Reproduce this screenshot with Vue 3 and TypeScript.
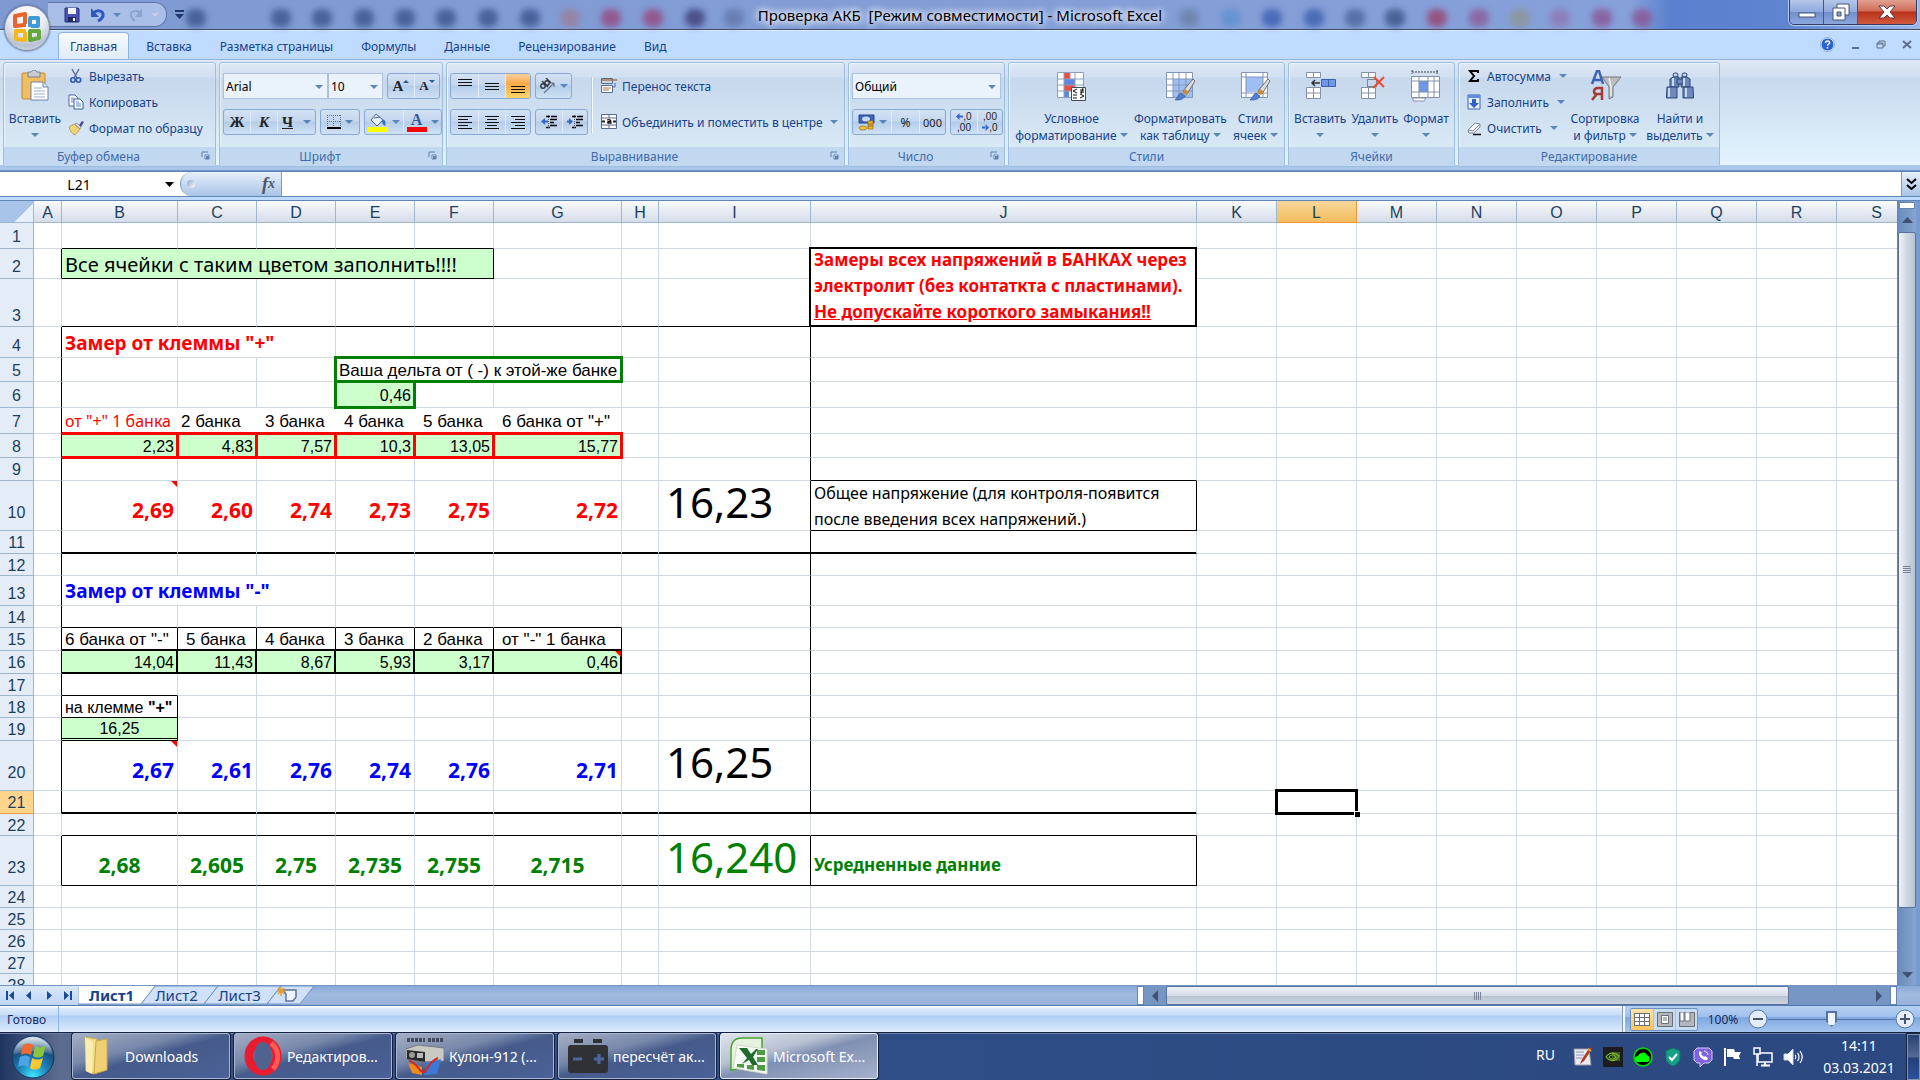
<script setup lang="ts">
import { ref } from 'vue'

interface Cell {
  text?: string
  bold?: string
  cls?: string
  colspan?: number
  rowspan?: number
}

const columns = [
  { name: 'A', width: 28 }, { name: 'B', width: 116 }, { name: 'C', width: 79 }, { name: 'D', width: 79 },
  { name: 'E', width: 79 }, { name: 'F', width: 79 }, { name: 'G', width: 128 }, { name: 'H', width: 37 },
  { name: 'I', width: 152 }, { name: 'J', width: 386 }, { name: 'K', width: 80 }, { name: 'L', width: 80 },
  { name: 'M', width: 80 }, { name: 'N', width: 80 }, { name: 'O', width: 80 }, { name: 'P', width: 80 },
  { name: 'Q', width: 80 }, { name: 'R', width: 80 }, { name: 'S', width: 80 },
]
const rowHeights = [26, 30, 48, 31, 24, 26, 26, 24, 23, 50, 23, 22, 30, 22, 23, 23, 22, 22, 23, 50, 23, 22, 50, 22, 22, 22, 22, 22]
const tableWidth = columns.reduce((sum, c) => sum + c.width, 34)

const cells: Record<string, Cell> = {
  B2: { text: 'Все ячейки с таким цветом заполнить!!!!', cls: 'fill calibri t20', colspan: 5 },
  J2: { cls: 'box2', rowspan: 2 },
  B4: { text: 'Замер от клеммы "+"', cls: 'calibri t19 b red', colspan: 3 },
  E5: { text: 'Ваша дельта от ( -) к этой-же банке', cls: 'green-box label', colspan: 3 },
  E6: { text: '0,46', cls: 'fill r green-box' },
  B7: { text: 'от "+" 1 банка', cls: 'red small bare' },
  C7: { text: '2 банка', cls: 'label bare' },
  D7: { text: '3 банка', cls: 'label ind bare' },
  E7: { text: '4 банка', cls: 'label ind bare' },
  F7: { text: '5 банка', cls: 'label ind bare' },
  G7: { text: '6 банка от "+"', cls: 'label ind' },
  J10: { cls: 'note' },
  I10: { text: '16,23', cls: 'calibri t42' },
  B13: { text: 'Замер от клеммы "-"', cls: 'calibri t19 b blue', colspan: 3 },
  B15: { text: '6 банка от "-"', cls: 'label' },
  C15: { text: '5 банка', cls: 'label ind' },
  D15: { text: '4 банка', cls: 'label ind' },
  E15: { text: '3 банка', cls: 'label ind' },
  F15: { text: '2 банка', cls: 'label ind' },
  G15: { text: 'от "-" 1 банка', cls: 'label ind' },
  B18: { text: 'на клемме ', bold: '"+"' },
  B19: { text: '16,25', cls: 'fill c dbl' },
  I20: { text: '16,25', cls: 'calibri t42' },
  L21: { cls: 'selected' },
  I23: { text: '16,240', cls: 'calibri t42 green' },
  J23: { text: 'Усредненные данние', cls: 'calibri t17 b green low' },
}

const letters = columns.map((c) => c.name)

function fillRow(row: number, values: string[], cls: string) {
  values.forEach((text, i) => {
    cells[`${letters[i + 1]}${row}`] = { text, cls }
  })
}
fillRow(8, ['2,23', '4,83', '7,57', '10,3', '13,05', '15,77'], 'fill r red-box')
fillRow(10, ['2,69', '2,60', '2,74', '2,73', '2,75', '2,72'], 'calibri t21 b r red low')
fillRow(16, ['14,04', '11,43', '8,67', '5,93', '3,17', '0,46'], 'fill r')
fillRow(20, ['2,67', '2,61', '2,76', '2,74', '2,76', '2,71'], 'calibri t21 b r blue low')
fillRow(23, ['2,68', '2,605', '2,75', '2,735', '2,755', '2,715'], 'calibri t21 b c green low')

function mark(from: string, to: string, first: number, last: number, cls: string) {
  for (let c = letters.indexOf(from); c <= letters.indexOf(to); c++) {
    for (let r = first; r <= last; r++) {
      const key = `${letters[c]}${r}`
      const cell = (cells[key] ??= {})
      cell.cls = `${cell.cls ?? ''} ${cls}`
    }
  }
}
mark('A', 'A', 2, 2, 'kr')
mark('B', 'F', 1, 1, 'kb')
mark('B', 'B', 2, 2, 'kr kb')
mark('B', 'I', 3, 3, 'kb')
mark('A', 'A', 4, 21, 'kr')
mark('I', 'I', 4, 21, 'kr')
mark('J', 'J', 9, 10, 'kb')
mark('J', 'J', 10, 10, 'kr')
mark('B', 'J', 11, 11, 'kb2')
mark('B', 'G', 14, 14, 'kb')
mark('B', 'G', 15, 15, 'kr kb2')
mark('B', 'G', 16, 16, 'kr2 kb2')
mark('B', 'B', 17, 17, 'kb')
mark('B', 'B', 18, 18, 'kr kb')
mark('B', 'B', 19, 19, 'kr')
mark('B', 'J', 21, 21, 'kb2')
mark('B', 'J', 22, 22, 'kb')
mark('A', 'A', 23, 23, 'kr')
mark('B', 'J', 23, 23, 'kb')
mark('I', 'J', 23, 23, 'kr')
mark('B', 'B', 10, 10, 'comment')
mark('B', 'B', 20, 20, 'comment')
mark('G', 'G', 16, 16, 'comment')

const covered = new Set(['C2', 'D2', 'E2', 'F2', 'J3', 'C4', 'D4', 'F5', 'G5', 'C13', 'D13'])

function lift(height: number) {
  if (height === 50) return 'p8'
  if (height === 48) return 'p1'
  if (height >= 26) return 'p2'
  return height > 22 ? 'p1' : ''
}

const rows = rowHeights.map((height, i) => ({
  number: i + 1,
  height,
  lift: lift(height),
  cells: letters.filter((l) => !covered.has(`${l}${i + 1}`)).map((l) => ({ key: `${l}${i + 1}`, ...cells[`${l}${i + 1}`] })),
}))

const ribbonTabs = ['Вставка', 'Разметка страницы', 'Формулы', 'Данные', 'Рецензирование', 'Вид']
const sheetTabs = ['Лист1', 'Лист2', 'Лист3']
const activeCell = ref('L21')
const formula = ref('')
const fontName = ref('Arial')
const fontSize = ref('10')
const numberFormat = ref('Общий')
const zoomLevel = ref(50)

const glassSpots = [
  { x: 196, color: '#3b568c' }, { x: 281, color: '#3b568c' }, { x: 322, color: '#3b568c' }, { x: 364, color: '#3b568c' },
  { x: 405, color: '#3b568c' }, { x: 446, color: '#3b568c' }, { x: 488, color: '#3b568c' }, { x: 530, color: '#3b568c' },
  { x: 570, color: '#9a8099' }, { x: 611, color: '#96497f' }, { x: 653, color: '#96497f' }, { x: 695, color: '#3d3f78' },
  { x: 734, color: '#6278ab' }, { x: 1189, color: '#6b82a6' }, { x: 1231, color: '#5f90cf' }, { x: 1272, color: '#3c5eae' },
  { x: 1314, color: '#3c5eae' }, { x: 1355, color: '#4b669c' }, { x: 1395, color: '#3a5585' }, { x: 1437, color: '#99426e' },
  { x: 1479, color: '#8b5c98' }, { x: 1520, color: '#8d9593' }, { x: 1560, color: '#8f78b4' }, { x: 1602, color: '#8a5595' },
  { x: 1642, color: '#8a5595' },
]
</script>

<template>
  <div class="app">
    <header class="titlebar">
      <span v-for="spot in glassSpots" :key="spot.x" class="spot" :style="{ left: spot.x - 10 + 'px', background: spot.color }"></span>
      <div class="qat">
        <button aria-label="Сохранить">
          <svg width="16" height="16" viewBox="0 0 16 16"><path d="M1 1h13l1 1v13H1z" fill="#4a50b8" stroke="#27307e" /><path d="M4 1h8v6H4z" fill="#eef2fb" /><path d="M4 10h8v5H4z" fill="#20285f" /><path d="M9 11h2v3H9z" fill="#fff" /></svg>
        </button>
        <button aria-label="Отменить">
          <svg width="18" height="16" viewBox="0 0 18 16"><path d="M4 6c5-4 11-2 10 3-1 3-3 4-5 5" fill="none" stroke="#2f5bc0" stroke-width="3" /><path d="M2 1v9h8z" fill="#2f5bc0" /></svg>
        </button>
        <i class="tri"></i>
        <button aria-label="Вернуть">
          <svg width="18" height="16" viewBox="0 0 18 16"><path d="M14 6C9 2 3 4 4 9c1 3 2 4 4 5" fill="none" stroke="#8ba3cf" stroke-width="2" /><path d="M15 2v8H8z" fill="#8ba3cf" /></svg>
        </button>
        <i class="tri pale"></i>
      </div>
      <button class="qat-more" aria-label="Настройка панели быстрого доступа"><svg width="9" height="10" viewBox="0 0 9 10"><path d="M0 1h9" stroke="#1f3567" stroke-width="2" /><path d="M0 4h9L4.500 9z" fill="#1f3567" /></svg></button>
      <h1>Проверка АКБ&nbsp; [Режим совместимости] - Microsoft Excel</h1>
      <div class="win-controls">
        <button aria-label="Свернуть"><svg width="18" height="14" viewBox="0 0 18 14"><rect x="1" y="8" width="16" height="4" fill="#fff" stroke="#475578" /></svg></button>
        <button aria-label="Восстановить"><svg width="20" height="18" viewBox="0 0 20 18"><path d="M6 1h12v11H6z" fill="#fff" stroke="#475578" /><path d="M2 5h12v12H2z" fill="#fff" stroke="#475578" /><path d="M6 9h4v4H6z" fill="#8b9dcb" stroke="#475578" /></svg></button>
        <button class="close" aria-label="Закрыть"><svg width="18" height="14" viewBox="0 0 18 14"><path d="M1 1h5l3 3 3-3h5l-5 6 5 6h-5L9 10l-3 3H1l5-6z" fill="#fff" stroke="#5b3a45" /></svg></button>
      </div>
      <button class="office" aria-label="Кнопка Office">
        <svg width="32" height="32" viewBox="0 0 32 32">
          <g fill="none" stroke-width="4" stroke-linejoin="round">
            <path d="M4 4l10-2v11l-10 1z" stroke="#e8642a" />
            <path d="M19 6h8v8h-8z" stroke="#3f9ad6" />
            <path d="M5 19h9v9l-9-1z" stroke="#f5b81c" />
            <path d="M19 19h9v7l-9 2z" stroke="#63a83c" />
          </g>
          <path d="M12 16h8M16 12v8" stroke="#fff" stroke-width="2" />
        </svg>
      </button>
    </header>

    <nav class="tabs">
      <button class="tab on">Главная</button>
      <button v-for="t in ribbonTabs" :key="t" class="tab">{{ t }}</button>
      <div class="doc-controls">
        <button aria-label="Справка"><svg width="15" height="15" viewBox="0 0 15 15"><circle cx="7.500" cy="7.500" r="6.500" fill="#2a62d4" stroke="#f5f9ff" stroke-width="1" /><circle cx="7.500" cy="7.500" r="7" fill="none" stroke="#5d83c4" stroke-width=".6" /><path d="M5.500 6c0-3 4.500-2.500 4 0-.2 1-2 1.200-2 2.700M7.500 10v1.500" stroke="#fff" stroke-width="1.500" fill="none" /></svg></button>
        <button aria-label="Свернуть окно"><svg width="9" height="9" viewBox="0 0 9 9"><path d="M1 8h7" stroke="#5f6f8a" stroke-width="2" /></svg></button>
        <button aria-label="Восстановить окно"><svg width="10" height="9" viewBox="0 0 10 9"><path d="M3 3V1h6v5H7M1 3h6v5H1z" fill="none" stroke="#5f6f8a" /><path d="M1 4h6" stroke="#5f6f8a" /></svg></button>
        <button aria-label="Закрыть окно"><svg width="10" height="9" viewBox="0 0 10 9"><path d="M1 1l8 7M9 1L1 8" stroke="#5f6f8a" stroke-width="2" /></svg></button>
      </div>
    </nav>

    <div class="ribbon">
      <section class="group g1">
        <div class="body">
          <button class="big paste">
            <svg width="28" height="32" viewBox="0 0 28 32"><rect x="1" y="3" width="23" height="26" rx="1" fill="#efbd62" stroke="#c28a34" /><path d="M7 2h3l2-2h2l2 2h3v5H7z" fill="#c5ccd6" stroke="#6a7484" stroke-width=".8" /><path d="M10 12h12l5 5v13H10z" fill="#fff" stroke="#6e83a6" /><path d="M22 12v5h5" fill="#dbe5f4" stroke="#6e83a6" /><path d="M13 18h8M13 21h11M13 24h11M13 27h11" stroke="#9badc9" /></svg>
            <span>Вставить</span><i class="tri"></i>
          </button>
          <div class="list">
            <button><svg width="16" height="16" viewBox="0 0 16 16"><path d="M4 1l5 9M11 1L6 10" stroke="#5a6f92" stroke-width="1.500" /><circle cx="5" cy="12" r="2.200" fill="none" stroke="#2d5bb5" stroke-width="1.600" /><circle cx="10.500" cy="12" r="2.200" fill="none" stroke="#2d5bb5" stroke-width="1.600" /></svg>Вырезать</button>
            <button><svg width="16" height="16" viewBox="0 0 16 16"><path d="M1 1h6l3 3v8H1z" fill="#fff" stroke="#4669a8" /><path d="M6 5h6l3 3v7H6z" fill="#fff" stroke="#3458a0" /><path d="M3 4h3M3 6h3M3 8h3M8 8h3M8 10h5M8 12h5" stroke="#5b83c8" /></svg>Копировать</button>
            <button><svg width="16" height="16" viewBox="0 0 16 16"><path d="M1 7l5-3 6 5-5 6c-3-1-5-4-6-8z" fill="#eed47a" stroke="#a88a3a" stroke-width=".7" /><path d="M7 4l5 5 1-2-4-4z" fill="#d8dde6" stroke="#777" stroke-width=".6" /><path d="M11 5l3-4 2 1-3 5z" fill="#4b4b93" /></svg>Формат по образцу</button>
          </div>
        </div>
        <footer class="with-launch"><span>Буфер обмена</span><button class="launch" aria-label="Параметры буфера обмена"><svg width="9" height="9" viewBox="0 0 9 9"><path d="M1 6V1h6" fill="none" stroke="#5c82ad" /><path d="M4 4h4v4H4z" fill="#fff" stroke="#5c82ad" /><path d="M5 5h3v3H5z" fill="#5c82ad" /></svg></button></footer>
      </section>

      <section class="group g2">
        <div class="body stack">
          <div class="line">
            <div class="sel w104"><select v-model="fontName" aria-label="Шрифт"><option>Arial</option></select><i class="tri"></i></div>
            <div class="sel w54"><select v-model="fontSize" aria-label="Размер шрифта"><option>10</option></select><i class="tri"></i></div>
            <div class="bar gap4"><button class="b26 serif" aria-label="Увеличить размер">A<i class="up"></i></button><button class="b25 serif sm" aria-label="Уменьшить размер">A<i class="dn"></i></button></div>
          </div>
          <div class="line">
            <div class="bar"><button class="b26 serif">Ж</button><button class="b27 serif it">К</button><button class="b38 serif un"><u>Ч</u><i class="tri"></i></button></div>
            <div class="bar gap4"><button class="b38" aria-label="Границы"><svg width="14" height="14" viewBox="0 0 14 14"><path d="M0 .5h14M0 6.500h14M.5 0v12M6.500 0v12M13.500 0v12" stroke="#5b6b85" stroke-dasharray="1 1" /><path d="M0 13h14" stroke="#000" stroke-width="2" /></svg><i class="tri"></i></button></div>
            <div class="bar gap4">
              <button class="b38" aria-label="Цвет заливки"><svg width="20" height="19" viewBox="0 0 20 19"><path d="M8 1l7 6-6 6-6-6z" fill="#e6eefb" stroke="#4a638f" /><path d="M6 5l6-1" stroke="#4a638f" /><path d="M14 6c4 1 4 4 3 7-2-1-3-3-3-5z" fill="#3c6fc8" /><path d="M0 14h20v5H0z" fill="#ff0" /></svg><i class="tri"></i></button>
              <button class="b38 color" aria-label="Цвет текста"><span class="letter">A</span><i class="tri"></i></button>
            </div>
          </div>
        </div>
        <footer class="with-launch"><span>Шрифт</span><button class="launch" aria-label="Параметры шрифта"><svg width="9" height="9" viewBox="0 0 9 9"><path d="M1 6V1h6" fill="none" stroke="#5c82ad" /><path d="M4 4h4v4H4z" fill="#fff" stroke="#5c82ad" /><path d="M5 5h3v3H5z" fill="#5c82ad" /></svg></button></footer>
      </section>

      <section class="group g3">
        <div class="body">
          <div class="stack">
            <div class="line">
              <div class="bar"><button class="b27 up-al" aria-label="По верхнему краю"><i class="al"></i></button><button class="b27" aria-label="По середине"><i class="al"></i></button><button class="b25 on dn-al" aria-label="По нижнему краю"><i class="al"></i></button></div>
              <div class="bar gap4"><button class="b36" aria-label="Ориентация"><svg width="17" height="16" viewBox="0 0 17 16"><g fill="none" stroke="#33373f" stroke-width="1.400"><circle cx="4" cy="8" r="2.200" /><path d="M3 3l6 6" /><circle cx="8" cy="5" r="2.200" /><path d="M7 0l5 5" /></g><path d="M5 15L15 5M15 5h-4M15 5v4" fill="none" stroke="#6a7388" stroke-width="1.200" /></svg><i class="tri"></i></button></div>
            </div>
            <div class="line">
              <div class="bar"><button class="b27" aria-label="По левому краю"><i class="al5 l"></i></button><button class="b27" aria-label="По центру"><i class="al5 m"></i></button><button class="b25" aria-label="По правому краю"><i class="al5 r"></i></button></div>
              <div class="bar gap4">
                <button class="b26" aria-label="Уменьшить отступ"><svg width="17" height="14" viewBox="0 0 17 14"><path d="M5 1.500h4M10 1.500h6M9 4.500h7M9 7.500h4M9 10.500h7M5 12.500h4" stroke="#000" stroke-width="1.500" /><path d="M7.500 0v14" stroke="#555" stroke-dasharray="1 1" /><path d="M4 3v7L0 6.500z" fill="#3567c7" /><path d="M3 6.500h4" stroke="#3567c7" stroke-width="2" /></svg></button>
                <button class="b25" aria-label="Увеличить отступ"><svg width="17" height="14" viewBox="0 0 17 14"><path d="M5 1.500h4M10 1.500h6M9 4.500h7M9 7.500h4M9 10.500h7M5 12.500h4" stroke="#000" stroke-width="1.500" /><path d="M7.500 0v14" stroke="#555" stroke-dasharray="1 1" /><path d="M2 3v7l4-3.500z" fill="#3567c7" /><path d="M0 6.500h4" stroke="#3567c7" stroke-width="2" /></svg></button>
              </div>
            </div>
          </div>
          <i class="vsep"></i>
          <div class="list wide">
            <button><svg width="16" height="16" viewBox="0 0 16 16"><path d="M0 2h16" stroke="#b0713c" stroke-width="1.500" /><path d="M.5.5h11v5H.5z" fill="none" stroke="#5a6c8c" /><path d="M.5 7.500h11v7H.5z" fill="#fff" stroke="#5a6c8c" /><path d="M2 10h8M2 12h6" stroke="#b0713c" /><path d="M14 5v4h-2" fill="none" stroke="#3567c7" /></svg>Перенос текста</button>
            <button><svg width="16" height="16" viewBox="0 0 16 16"><path d="M.5.5h15v14H.5z" fill="#fff" stroke="#5a6c8c" /><path d="M0 4h16M0 11h16M8 0v4M8 11v4" stroke="#5a6c8c" /><path d="M1 7.500h3M12 7.500h3" stroke="#222" stroke-width="2" /><path d="M6 6c3-1 4 0 4 3H7c-1-1 0-2 3-1.500" fill="none" stroke="#111" stroke-width="1.300" /></svg>Объединить и поместить в центре<i class="tri"></i></button>
          </div>
        </div>
        <footer class="with-launch"><span>Выравнивание</span><button class="launch" aria-label="Параметры выравнивания"><svg width="9" height="9" viewBox="0 0 9 9"><path d="M1 6V1h6" fill="none" stroke="#5c82ad" /><path d="M4 4h4v4H4z" fill="#fff" stroke="#5c82ad" /><path d="M5 5h3v3H5z" fill="#5c82ad" /></svg></button></footer>
      </section>

      <section class="group g4">
        <div class="body stack">
          <div class="line"><div class="sel w149"><select v-model="numberFormat" aria-label="Числовой формат"><option>Общий</option></select><i class="tri"></i></div></div>
          <div class="line">
            <div class="bar">
              <button class="b38" aria-label="Денежный формат"><svg width="17" height="17" viewBox="0 0 17 17"><path d="M1 1h15v8H1z" fill="#3e66b8" stroke="#27458c" /><ellipse cx="8" cy="5" rx="4" ry="2.500" fill="#c9d8f2" /><path d="M10 7h5v8h-5z" fill="#e9b730" stroke="#9b6d10" stroke-width=".7" /><path d="M10 10h5M10 12h5" stroke="#9b6d10" /><ellipse cx="5" cy="14" rx="4" ry="2" fill="#f0c040" stroke="#9b6d10" stroke-width=".7" /></svg><i class="tri"></i></button>
              <button class="b28">%</button><button class="b26 thousands">000</button>
            </div>
            <div class="bar gap4">
              <button class="b26 dec" aria-label="Увеличить разрядность"><span><svg width="7" height="7" viewBox="0 0 7 7"><path d="M0 3.500L3.500 0v7zM3 2.500h4v2H3z" fill="#3567c7" /></svg>,0</span><span>,00</span></button>
              <button class="b25 dec" aria-label="Уменьшить разрядность"><span>,00</span><span><svg width="7" height="7" viewBox="0 0 7 7"><path d="M7 3.500L3.500 0v7zM0 2.500h4v2H0z" fill="#3567c7" /></svg>,0</span></button>
            </div>
          </div>
        </div>
        <footer class="with-launch"><span>Число</span><button class="launch" aria-label="Параметры числа"><svg width="9" height="9" viewBox="0 0 9 9"><path d="M1 6V1h6" fill="none" stroke="#5c82ad" /><path d="M4 4h4v4H4z" fill="#fff" stroke="#5c82ad" /><path d="M5 5h3v3H5z" fill="#5c82ad" /></svg></button></footer>
      </section>

      <section class="group g5">
        <div class="body bigs">
          <button class="big"><svg width="32" height="32" viewBox="0 0 32 32"><path d="M2.500 2.500h26v25h-26z" fill="#fff" /><path d="M9 2h6v7H9zM9 15h11v6H9z" fill="#ee4f3c" /><path d="M9 9h11v6H9zM9 21h5v7H9z" fill="#5d87e0" /><path d="M2.500 2.500h26v25h-26zM2 9h27M2 15h27M2 21h27M9 2v26M15 2v7M20 2v26" fill="none" stroke="#8d9ebb" /><path d="M16.500 17.500h14v13h-14z" fill="#fff" stroke="#444b58" /><path d="M22 19l-4 2 4 2M18 25h4M18 28h4M25 20h4M25 22h4M28 18l-2 6M25 24l4 2-4 2" fill="none" stroke="#111" /></svg><span>Условное<br />форматирование <i class="tri"></i></span></button>
          <button class="big"><svg width="32" height="32" viewBox="0 0 32 32"><path d="M2.500 2.500h26v25h-26z" fill="#fff" /><path d="M9 9h20v19H9z" fill="#9fbff2" /><path d="M2.500 2.500h26v25h-26zM2 9h27M2 15h27M2 21h27M9 2v26M15 2v26M22 2v26" fill="none" stroke="#8295b5" /><path d="M29 9l2 2-8 13-4-3z" fill="#ddd" stroke="#555" stroke-width=".8" /><path d="M21 19l4 3-3 3-4-2z" fill="#c98b3e" /><path d="M17 23l4 3c-2 4-6 4-10 4 3-2 3-6 6-7z" fill="#4f80d2" stroke="#2e5396" stroke-width=".7" /></svg><span>Форматировать<br />как таблицу <i class="tri"></i></span></button>
          <button class="big"><svg width="32" height="32" viewBox="0 0 32 32"><path d="M2.500 2.500h26v25h-26z" fill="#fff" /><path d="M7 7h17v15H7z" fill="#9fbff2" /><path d="M2.500 2.500h26v25h-26zM2 7h27M2 23h27M7 2v26M24 2v26" fill="none" stroke="#8295b5" /><path d="M29 9l2 2-8 13-4-3z" fill="#ddd" stroke="#555" stroke-width=".8" /><path d="M21 19l4 3-3 3-4-2z" fill="#c98b3e" /><path d="M17 23l4 3c-2 4-6 4-10 4 3-2 3-6 6-7z" fill="#4f80d2" stroke="#2e5396" stroke-width=".7" /></svg><span>Стили<br />ячеек <i class="tri"></i></span></button>
        </div>
        <footer><span>Стили</span></footer>
      </section>

      <section class="group g6">
        <div class="body bigs">
          <button class="big"><svg width="32" height="32" viewBox="0 0 32 32"><path d="M2.500 2.500h14v5h-14zM2.500 17.500h14v11h-14zM2 23h15M9.500 2v6M9.500 17v11" fill="#fff" stroke="#8290a8" /><path d="M17.500 9.500h14v7h-14zM24.500 9v8" fill="#6d98e8" stroke="#3c5fa8" /><path d="M16 13H8M11 10l-3 3 3 3" fill="none" stroke="#333" stroke-width="1.500" /></svg><span>Вставить</span><i class="tri"></i></button>
          <button class="big"><svg width="32" height="32" viewBox="0 0 32 32"><path d="M2.500 2.500h14v5h-14zM2.500 17.500h14v11h-14zM2 23h15M9.500 2v6M9.500 17v11" fill="#fff" stroke="#8290a8" /><path d="M8.500 9.500h9v7h-9z" fill="none" stroke="#333" stroke-dasharray="1 1" /><path d="M15 7l10 10M25 7L14 18" stroke="#ee4a32" stroke-width="2" /></svg><span>Удалить</span><i class="tri"></i></button>
          <button class="big"><svg width="32" height="32" viewBox="0 0 32 32"><path d="M2 2h26M2 0v4M27 0v4" stroke="#444" stroke-dasharray="2 1" /><path d="M1.500 6.500h28v21h-28z" fill="#fff" /><path d="M9 11h9v11H9z" fill="#6d98e8" /><path d="M1.500 6.500h28v21h-28zM1 11h29M1 22h29M9 6v22M18 6v22M24 6v22" fill="none" stroke="#8290a8" /><path d="M3 28h13l-2 3H3z" fill="#fff" stroke="#8290a8" /></svg><span>Формат</span><i class="tri"></i></button>
        </div>
        <footer><span>Ячейки</span></footer>
      </section>

      <section class="group g7">
        <div class="body">
          <div class="list">
            <button><svg width="14" height="16" viewBox="0 0 14 16"><path d="M11 5V3H3l4 5-4 5h8v-2" fill="none" stroke="#000" stroke-width="2" /></svg>Автосумма<i class="tri"></i></button>
            <button><svg width="14" height="16" viewBox="0 0 14 16"><path d="M1 1h12v14H1z" fill="#e8f0fd" stroke="#3a62b0" /><path d="M1 1h12v3H1z" fill="#5f8be0" /><path d="M5 5h4v4h3l-5 5-5-5h3z" fill="#2f5fc8" /></svg>Заполнить<i class="tri"></i></button>
            <button><svg width="14" height="16" viewBox="0 0 14 16"><path d="M1 10l7-7 5 1v3l-6 6H2z" fill="#f4f6fa" stroke="#7d8798" /><path d="M1 10l5 1 7-7" fill="none" stroke="#7d8798" /><path d="M6 14.500h8" stroke="#111" stroke-width="1.500" /></svg>Очистить<i class="tri"></i></button>
          </div>
          <button class="big sort"><svg width="32" height="32" viewBox="0 0 32 32"><path d="M3 14L8 1h2l4 13M5 10h8" fill="none" stroke="#3b64b8" stroke-width="2.500" /><path d="M13 30V18H8c-4 1-4 6 0 6h5M8 24l-5 6" fill="none" stroke="#a33a34" stroke-width="2.500" /><path d="M13 7h19l-8 10v10l-4 2V17z" fill="#b9bcc0" stroke="#74787e" /><path d="M20 8l2 8v10" stroke="#eee" stroke-width="1.500" fill="none" /></svg><span>Сортировка<br />и фильтр <i class="tri"></i></span></button>
          <button class="big find"><svg width="32" height="32" viewBox="0 0 32 32"><g fill="#6c87b8" stroke="#2d4677"><rect x="9" y="3" width="5" height="4" rx="2" fill="#c4d3ee" /><rect x="18" y="3" width="5" height="4" rx="2" fill="#c4d3ee" /><path d="M6 9l3-2h6v10H6zM17 7h6l3 2v8h-9z" /><rect x="13" y="9" width="6" height="5" /><path d="M3 17h10v11H2.500zM19 17h10l.5 11H19z" /></g><path d="M5 18v9M22 18v9M9 8v8M20 8v8" stroke="#c8d8f4" stroke-width="2" /></svg><span>Найти и<br />выделить <i class="tri"></i></span></button>
        </div>
        <footer><span>Редактирование</span></footer>
      </section>
    </div>

    <div class="formula-bar">
      <input v-model="activeCell" class="name-box" aria-label="Имя ячейки" />
      <button class="name-drop" aria-label="Список имен"><svg width="9" height="5" viewBox="0 0 9 5"><path d="M0 0h9L4.500 5z" /></svg></button>
      <div class="fx"><i class="knob"></i><button aria-label="Вставить функцию"><em>f</em><sub>x</sub></button></div>
      <input v-model="formula" class="formula" aria-label="Строка формул" />
      <button class="expand" aria-label="Развернуть строку формул"><svg width="11" height="12" viewBox="0 0 11 12"><path d="M1 1l4.500 4L10 1M1 7l4.500 4L10 7" fill="none" stroke="#000" stroke-width="2" /></svg></button>
    </div>

    <main class="sheet">
      <div class="grid">
        <table :style="{ width: tableWidth + 'px' }">
          <colgroup><col class="head-col" /><col v-for="c in columns" :key="c.name" :style="{ width: c.width + 'px' }" /></colgroup>
          <thead>
            <tr><th class="corner"></th><th v-for="c in columns" :key="c.name" scope="col" :class="{ hot: c.name === 'L' }">{{ c.name }}</th></tr>
          </thead>
          <tbody>
            <tr v-for="row in rows" :key="row.number" :class="row.lift" :style="{ height: row.height + 'px' }">
              <th scope="row" :class="{ hot: row.number === 21 }">{{ row.number }}</th>
              <td v-for="cell in row.cells" :key="cell.key" :class="cell.cls" :colspan="cell.colspan" :rowspan="cell.rowspan">
                <p v-if="cell.key === 'J2'" class="warning">Замеры всех напряжений в БАНКАХ через<br />электролит (без контаткта с пластинами).<br /><u>Не допускайте короткого замыкания!!</u></p>
                <p v-else-if="cell.key === 'J10'" class="remark">Общее напряжение (для контроля-появится<br />после введения всех напряжений.)</p>
                <template v-else>{{ cell.text }}<b v-if="cell.bold">{{ cell.bold }}</b></template>
              </td>
            </tr>
          </tbody>
        </table>
      </div>
      <div class="vscroll">
        <i class="split"></i>
        <button aria-label="Вверх"><svg width="11" height="6" viewBox="0 0 11 6"><path d="M0 6h11L5.500 0z" fill="#3f5274" /></svg></button>
        <div class="vthumb"><i></i></div>
        <div class="vtrack"></div>
        <button aria-label="Вниз"><svg width="11" height="6" viewBox="0 0 11 6"><path d="M0 0h11L5.500 6z" fill="#3f5274" /></svg></button>
      </div>
    </main>

    <div class="sheet-bar">
      <div class="sheet-nav">
        <button aria-label="Первый лист"><svg width="8" height="9" viewBox="0 0 8 9"><path d="M1 0v9" stroke="#1c4a94" stroke-width="2" /><path d="M8 0v9L3 4.500z" fill="#1c4a94" /></svg></button>
        <button aria-label="Предыдущий лист"><svg width="8" height="9" viewBox="0 0 8 9"><path d="M6 0v9L1 4.500z" fill="#1c4a94" /></svg></button>
        <button aria-label="Следующий лист"><svg width="8" height="9" viewBox="0 0 8 9"><path d="M2 0v9l5-4.500z" fill="#1c4a94" /></svg></button>
        <button aria-label="Последний лист"><svg width="8" height="9" viewBox="0 0 8 9"><path d="M7 0v9" stroke="#1c4a94" stroke-width="2" /><path d="M0 0v9l5-4.500z" fill="#1c4a94" /></svg></button>
      </div>
      <button v-for="(t, i) in sheetTabs" :key="t" class="sheet-tab" :class="{ on: i === 0 }">
        <svg class="shape" width="78" height="19" viewBox="0 0 78 19"><path :d="i === 0 ? 'M0 0V18H63L77 0' : 'M0 18H63L77 0H14Z'" :fill="i === 0 ? '#fff' : '#cfe0f7'" stroke="#6f93c4" /></svg><span>{{ t }}</span>
      </button>
      <button class="sheet-tab new" aria-label="Вставить лист">
        <svg class="shape" width="48" height="19" viewBox="0 0 48 19"><path d="M0 18H33L47 0H14Z" fill="#cfe0f7" stroke="#6f93c4" /><path d="M16 4h13v7l-3 4h-7V8z" fill="#eef4fd" stroke="#5f7296" stroke-width="1.500" /><path d="M14 1v9M10 5h9M11 2l6 6M17 2l-6 6" stroke="#e99b2e" stroke-width="1.300" /></svg>
      </button>
      <div class="hscroll">
        <i class="hsplit"></i>
        <button aria-label="Влево"><svg width="6" height="12" viewBox="0 0 6 12"><path d="M6 0v12L0 6z" fill="#3f5274" /></svg></button>
        <div class="hthumb"><i></i></div>
        <div class="htrack"></div>
        <button aria-label="Вправо"><svg width="6" height="12" viewBox="0 0 6 12"><path d="M0 0v12l6-6z" fill="#3f5274" /></svg></button>
        <i class="hsplit"></i>
      </div>
    </div>

    <div class="status">
      <span class="ready">Готово</span>
      <div class="status-right">
        <div class="views">
          <button class="on" aria-label="Обычный"><svg width="16" height="13" viewBox="0 0 16 13"><path d="M0 0h16v13H0z" fill="#6b6f75" /><path d="M1 1h4v3H1zM6 1h4v3H6zM11 1h4v3h-4zM1 5h4v3H1zM6 5h4v3H6zM11 5h4v3h-4zM1 9h4v3H1zM6 9h4v3H6zM11 9h4v3h-4z" fill="#fff" /></svg></button>
          <button aria-label="Разметка страницы"><svg width="16" height="15" viewBox="0 0 16 15"><path d="M.5.500h15v14H.5z" fill="#b4b8be" stroke="#6b6f75" /><path d="M4.500 3.500h7v8h-7z" fill="#fff" stroke="#6b6f75" /><path d="M6 6h4M6 8h4" stroke="#6b6f75" /></svg></button>
          <button aria-label="Страничный"><svg width="16" height="15" viewBox="0 0 16 15"><path d="M.5.500h15v14H.5z" fill="#b4b8be" stroke="#6b6f75" /><path d="M1 0h4v9H1zM6 0h5v9H6z" fill="#fff" stroke="#6b6f75" /></svg></button>
        </div>
        <button class="pct">100%</button>
        <button class="round" aria-label="Уменьшить"><svg width="20" height="20" viewBox="0 0 20 20"><circle cx="10" cy="10" r="9" fill="#e2ecfa" stroke="#54749f" /><path d="M5 10h10" stroke="#43556f" stroke-width="2" /></svg></button>
        <input v-model="zoomLevel" type="range" min="0" max="100" aria-label="Масштаб" />
        <button class="round" aria-label="Увеличить"><svg width="20" height="20" viewBox="0 0 20 20"><circle cx="10" cy="10" r="9" fill="#e2ecfa" stroke="#54749f" /><path d="M5 10h10M10 5v10" stroke="#43556f" stroke-width="2" /></svg></button>
      </div>
    </div>

    <footer class="taskbar">
      <button class="start" aria-label="Пуск">
        <svg width="46" height="44" viewBox="0 0 46 44">
          <defs>
            <radialGradient id="orb" cx="50%" cy="95%" r="90%"><stop offset="0" stop-color="#3fe6ff" /><stop offset=".4" stop-color="#1b80b8" /><stop offset=".75" stop-color="#1c4b7c" /><stop offset="1" stop-color="#7fa0c0" /></radialGradient>
            <linearGradient id="orbTop" x1="0" y1="0" x2="0" y2="1"><stop offset="0" stop-color="#fff" stop-opacity=".7" /><stop offset="1" stop-color="#fff" stop-opacity=".1" /></linearGradient>
          </defs>
          <circle cx="23" cy="22" r="21" fill="url(#orb)" stroke="#16365c" />
          <path d="M4 20a19 18 0 0 1 38 0c-10-5-26-5-38 0z" fill="url(#orbTop)" />
          <path d="M13 10c4-2 7-2 10 0l-2 10c-3-2-6-2-10 0z" fill="#ef6a2c" />
          <path d="M25 11c4 2 7 2 11-1l-3 11c-4 2-7 2-10 0z" fill="#8bc540" />
          <path d="M10 22c4-2 7-2 10 0l-2 10c-3-2-6-2-10 0z" fill="#4aa6e6" />
          <path d="M22 23c4 2 7 2 11 0l-3 10c-4 2-7 2-10 0z" fill="#fbc82f" />
        </svg>
      </button>
      <button class="task"><svg width="38" height="42" viewBox="0 0 38 42"><path d="M3 2l12 2v25l-3 10-8-3z" fill="#f5dd85" stroke="#caa94a" /><path d="M14 6l11-2v31l-13 4z" fill="#f0d074" stroke="#caa94a" /><path d="M3 2l8 5-1 32-6-3z" fill="#fbeeb0" /></svg><span>Downloads</span></button>
      <button class="task"><svg width="38" height="42" viewBox="0 0 38 42"><ellipse cx="19" cy="21" rx="14" ry="15" fill="none" stroke="#e81c2e" stroke-width="9" /><ellipse cx="19" cy="21" rx="9" ry="14" fill="#506390" /><path d="M27 8c8 6 9 18 2 26" stroke="#ff5a56" stroke-width="5" fill="none" /></svg><span>Редактиров...</span></button>
      <button class="task"><svg width="38" height="42" viewBox="0 0 38 42"><path d="M0 14l12-4 26 3v13L17 27 0 24z" fill="#c9c9c4" stroke="#666" stroke-width=".7" /><path d="M1 15l18 2v10L1 24z" fill="#2b2b2e" /><circle cx="6" cy="20" r="3" fill="#999" /><path d="M11 18h6v5h-6z" fill="#bbb" /><path d="M2 28l14 4v8L6 38z" fill="#f08a1e" /><path d="M20 28l15-4-4 15-13 1z" fill="#3b78d8" /><path d="M3 26c10 2 9 12 16 11 3-6 8-12 13-14" stroke="#d22b20" stroke-width="2" fill="none" /><path d="M1 5h18M22 5h15" stroke="#23283a" stroke-width="4" stroke-dasharray="3 1" opacity=".7" /></svg><span>Кулон-912 (...</span></button>
      <button class="task"><svg width="40" height="42" viewBox="0 0 40 42"><path d="M6 4h9v4H6zM25 4h9v4h-9z" fill="#303134" /><rect x="0" y="10" width="40" height="28" rx="3" fill="#303134" /><path d="M5 24h9M26 24h10M31 19v10" stroke="#4f67a0" stroke-width="3" /></svg><span>пересчёт ак...</span></button>
      <button class="task on"><svg width="38" height="42" viewBox="0 0 38 42"><path d="M1 35V15C1 6 5 3 12 3h20v26z" fill="#e6f1df" stroke="#4aa52c" stroke-width="1.500" /><path d="M7 10l30 4v25L3 33z" fill="#f6faf2" stroke="#cfdac8" /><path d="M9 13h8l4 6 5-5h2l-5 8 5 8h-6l-3-5-7 4 5-6z" fill="#1e6c2c" /><path d="M27 15h8v5h-8zM27 22h8v5h-8zM27 30h8v6l-8-1zM17 30h7v5l-7-1zM7 29h7v4l-7-1z" fill="#4f9b48" /></svg><span>Microsoft Ex...</span></button>
      <div class="tray">
        <span class="lang">RU</span>
        <svg width="20" height="20" viewBox="0 0 20 20"><path d="M1 2h15l2 16H2z" fill="#e8ebf2" stroke="#9a9ca6" /><path d="M3 5h8M3 8h8M3 11h6" stroke="#8e94b8" /><path d="M17 0l-8 12-2 5 4-3 8-12z" fill="#b03c28" /><path d="M15 2l3 2" stroke="#e9a13a" stroke-width="2" /></svg>
        <svg width="20" height="20" viewBox="0 0 20 20"><path d="M0 0h20v20H0z" fill="#1d1d1f" /><path d="M3 10c3-5 9-5 13-1-3 6-9 6-13 1z" fill="none" stroke="#76b82a" stroke-width="1.200" /><path d="M6 10c2-3 5-3 7 0-2 3-5 3-7 0z" fill="none" stroke="#76b82a" stroke-width="1.200" /><path d="M9 5h8v9H9z" fill="#76b82a" opacity=".4" /></svg>
        <svg width="20" height="20" viewBox="0 0 20 20"><circle cx="10" cy="10" r="9" fill="#000" stroke="#0d0" stroke-width="1.500" /><path d="M5 15a3 3 0 0 1 0-6 5 5 0 0 1 9-1 4 4 0 0 1 1 7z" fill="#0f0" /></svg>
        <svg width="20" height="20" viewBox="0 0 20 20"><path d="M10 1l7 3v7c0 4-4 7-7 8-3-1-7-4-7-8V4z" fill="#16a085" stroke="#0c7a66" /><path d="M6 10l3 3 5-6" fill="none" stroke="#fff" stroke-width="2" /></svg>
        <svg width="20" height="20" viewBox="0 0 20 20"><path d="M4 1h12l3 3v9l-3 3h-5l-4 4v-4H4l-3-3V4z" fill="#7d63e0" stroke="#d6ccff" /><path d="M6 5c-1 4 4 9 8 8l1-2-3-2-1 1-3-3 1-1-2-2z" fill="#fff" /><path d="M11 4c2 0 4 2 4 4" stroke="#fff" fill="none" /></svg>
        <svg width="20" height="20" viewBox="0 0 20 20"><path d="M2 1v18" stroke="#fff" stroke-width="2" /><path d="M4 2h7l1 3h6l-2 4 1 3h-6l-1-2H4z" fill="#fff" /></svg>
        <svg width="20" height="20" viewBox="0 0 20 20"><path d="M5 6h14v9H5z" fill="#27447c" stroke="#fff" stroke-width="1.500" /><path d="M12 15v3M8 18.500h9" stroke="#fff" stroke-width="2" /><path d="M1 1h6v6H1zM4 7v12" fill="#27447c" stroke="#fff" stroke-width="1.500" /></svg>
        <svg width="20" height="20" viewBox="0 0 20 20"><path d="M1 7h4l5-5v16l-5-5H1z" fill="#fff" stroke="#c9d2e4" /><path d="M12 8c1 1 1 3 0 4M14.500 6c2 2 2 6 0 8M17 4c3 4 3 8 0 12" fill="none" stroke="#fff" stroke-width="1.200" /></svg>
        <time>14:11<br />03.03.2021</time>
        <button class="desktop" aria-label="Свернуть все окна"></button>
      </div>
    </footer>
  </div>
</template>

<style>
body { margin: 0; }
</style>

<style scoped>
.app { height: 100vh; display: flex; flex-direction: column; overflow: hidden; font: 12px/17px "Noto Sans", "Open Sans", sans-serif; color: #15428b; background: #bfdbff; }
button { font: inherit; color: inherit; border: 0; background: none; padding: 0; margin: 0; display: flex; align-items: center; justify-content: center; white-space: nowrap; }
svg { flex: none; display: block; }
.tri { flex: none; display: inline-block; width: 0; height: 0; border: 4px solid transparent; border-top-color: #5b86b9; border-bottom: 0; }
.tri.pale { border-top-color: #c3cfe4; }

.titlebar { position: relative; z-index: 2; flex: none; height: 29px; border-bottom: 1px solid #3d4c68; display: flex; align-items: flex-start; background: linear-gradient(90deg, #7f99d3, #86a0d9 85%, #5a80cf 87%, #5f84d0 93%, #9db7e8); }
.spot { position: absolute; top: 9px; width: 20px; height: 18px; border-radius: 8px; filter: blur(3px); opacity: .8; }
.qat { position: relative; margin: 2px 0 0 48px; width: 119px; height: 25px; box-sizing: border-box; border: 1px solid #5f76a5; border-left: 0; border-radius: 0 12px 12px 0; background: #a9bfe8; display: flex; align-items: center; padding-left: 16px; gap: 9px; }
.qat .tri { margin: 0 -3px; }
.qat-more { position: relative; margin: 10px 0 0 8px; }
h1 { position: absolute; left: 0; right: 0; top: 4px; margin: 0; font-size: 15px; line-height: 22px; font-weight: 400; color: #000; text-align: center; text-shadow: 0 0 6px #fff, 0 0 8px #fff, 0 0 10px #dfe9fb; }
.win-controls { position: relative; margin: -1px 3px 0 auto; display: flex; height: 24px; border: 1px solid #2e3d63; border-radius: 0 0 5px 5px; overflow: hidden; box-shadow: 0 0 0 1px #b9cbef; }
.win-controls button { width: 34px; background: linear-gradient(#b5c6ea, #8fa9dc 50%, #6f8fcd 50%, #8ba7dc); border-right: 1px solid #46567e; }
.win-controls .close { width: 58px; border: 0; background: linear-gradient(#e2a091, #cf6d58 45%, #b8311a 50%, #d2593d); }
.office { position: absolute; left: 4px; top: 5px; width: 46px; height: 46px; border-radius: 50%; border: 1px solid #7f8da8; background: radial-gradient(circle at 50% 20%, #fff, #e8ebf2 45%, #b9c2d3 75%, #eef2f8); box-shadow: 0 0 2px #33415e; }

.tabs { flex: none; height: 29px; display: flex; padding-left: 58px; background: #bfdbff; box-shadow: inset 0 1px #dcebff; box-sizing: border-box; }
.tab { margin: 3px 0 0; padding: 0 14px; height: 26px; color: #15428b; }
.tab.on { border: 1px solid #8db2e3; border-bottom: 0; border-radius: 4px 4px 0 0; background: linear-gradient(#f7fbff, #dfeaf7); margin: 2px 3px 0 0; padding: 0 11px; height: 28px; }
.doc-controls { margin-left: auto; display: flex; align-items: center; gap: 16px; padding-right: 8px; }

.ribbon { flex: none; height: 112px; box-sizing: border-box; border-top: 1px solid #8db2e3; border-bottom: 1px solid #6f94c4; padding: 2px 3px 5px; display: flex; gap: 3px; background: linear-gradient(#dfe9f5, #d2e0f1 14%, #c8d9ed 17%, #e3f4ff 95%, #a9c5ea 96%); }
.group { flex: none; box-sizing: border-box; height: 105px; border: 1px solid #9dbfdd; border-radius: 3px; box-shadow: inset 1px 1px #ebf3fb; display: flex; flex-direction: column; background: linear-gradient(#dee8f5, #d1dff0 14px, #c7d8ed 15px, #d8e8f5 84px); }
.g1 { width: 213px; } .g2 { width: 224px; } .g3 { width: 399px; } .g4 { width: 157px; } .g5 { width: 277px; } .g6 { width: 167px; } .g7 { width: 262px; }
.body { flex: 1; display: flex; }
.group footer { flex: none; height: 19px; background: #c1d8f0; color: #3e6aaa; display: flex; align-items: center; justify-content: center; position: relative; }
.group footer.with-launch { padding-right: 22px; }
.launch { position: absolute; right: 5px; top: 4px; }
.big { flex-direction: column; justify-content: flex-start; padding-top: 7px; text-align: center; }
.big span { margin-top: 8px; }
.big > .tri { margin-top: 6px; }
.big span .tri { vertical-align: 3px; }
.paste { width: 62px; }
.list { display: flex; flex-direction: column; padding: 0 0 0 2px; }
.list button { height: 26px; justify-content: flex-start; gap: 5px; }
.list .tri { margin-left: 2px; }
.stack { flex-direction: column; display: flex; gap: 10px; padding: 10px 0 0 3px; flex: none; }
.body.stack { flex: 1; }
.line { display: flex; height: 26px; }
.sel { position: relative; display: flex; height: 26px; box-sizing: border-box; border: 1px solid #abc1de; background: #eaf2fb; }
.sel select { appearance: none; border: 0; background: none; width: 100%; padding: 0 2px; margin: 0; font: 12px "Noto Sans", sans-serif; color: #000; }
.sel .tri { position: absolute; right: 4px; top: 11px; pointer-events: none; }
.w104 { width: 105px; } .w54 { width: 55px; } .w149 { width: 149px; }
.bar { display: flex; box-sizing: border-box; height: 26px; border: 1px solid #88a9d5; border-radius: 3px; background: linear-gradient(#d3e1f3, #c4d7ef 45%, #b5cdea 50%, #cfe0f4); overflow: hidden; }
.bar button { color: #222; gap: 4px; }
.bar button + button { border-left: 1px solid #dfeaf8; }
.gap4 { margin-left: 4px; }
.b25, .b26, .b27, .b28, .b36, .b38 { box-sizing: border-box; width: 26px; }
.b25 { width: 25px; } .b27 { width: 27px; } .b28 { width: 28px; } .b36 { width: 35px; } .b38 { width: 38px; }
.bar .on { background: linear-gradient(#fbcf9b, #fdab48 40%, #fbd669); }
.serif { font: bold 15px "Liberation Serif", serif; }
.serif.sm { font-size: 13px; }
.it { font-style: italic; }
.up, .dn { border: 3px solid transparent; border-bottom-color: #2c5a9e; border-top: 0; margin: -10px 0 0 -4px; }
.dn { border-bottom: 0; border-top: 3px solid #2c5a9e; }
.un .tri { margin-left: 6px; }
.letter { width: 20px; font: bold 16px/15px "Liberation Serif", serif; color: #33599d; border-bottom: 5px solid red; }
.al { width: 14px; height: 7px; background: repeating-linear-gradient(#111 0 1px, transparent 1px 3px); }
.up-al { padding-bottom: 8px; } .dn-al { padding-top: 6px; }
.al5 { width: 14px; height: 13px; background: linear-gradient(#111, #111) 0 0 / 14px 1px no-repeat, linear-gradient(#111, #111) 0 3px / 10px 1px no-repeat, linear-gradient(#111, #111) 0 6px / 14px 1px no-repeat, linear-gradient(#111, #111) 0 9px / 10px 1px no-repeat, linear-gradient(#111, #111) 0 12px / 14px 1px no-repeat; }
.al5.m { background-position: 0 0, 2px 3px, 0 6px, 2px 9px, 0 12px; }
.al5.r { background-position: 0 0, 4px 3px, 0 6px, 4px 9px, 0 12px; }
.vsep { width: 1px; height: 56px; margin: 14px 7px 0 4px; background: #f3f8fd; box-shadow: -1px 0 #b3cbe6; }
.list.wide { padding: 10px 0 0 1px; gap: 10px; }
.thousands { font-size: 11px; }
.dec { flex-direction: column; font: 10px/11px "Liberation Sans", sans-serif; }
.bar .dec { gap: 0; }
.dec span { display: flex; align-items: center; }
.bigs { justify-content: space-evenly; }
.g7 .list { width: 96px; padding-left: 8px; }
.g7 .list button { gap: 6px; }
.sort { width: 84px; } .find { width: 66px; }

.formula-bar { flex: none; height: 26px; box-sizing: border-box; border-bottom: 1px solid #5f86b5; border-top: 1px solid #5f86b5; display: flex; background: #fff; }
.name-box { width: 158px; border: 0; padding: 0; text-align: center; font: 14px "Noto Sans", sans-serif; color: #000; background: #fff; }
.name-drop { width: 22px; }
.fx { width: 102px; box-sizing: border-box; border: 1px solid #7d9dc6; border-width: 0 1px; border-radius: 12px 0 0 12px; background: linear-gradient(#e6effa, #a9c4e8); display: flex; align-items: center; justify-content: space-between; padding: 0 6px; }
.knob { width: 8px; height: 8px; border-radius: 50%; background: linear-gradient(135deg, #8fa5c4, #fff); }
.fx button { font: bold italic 18px/20px "Liberation Serif", serif; color: #4b5566; }
.fx sub { font-size: 14px; }
.formula { flex: 1; border: 0; padding: 0 6px; font: 14px "Noto Sans", sans-serif; }
.expand { width: 19px; border-left: 1px solid #7d9dc6; background: linear-gradient(#e6effa, #a9c4e8); }

.sheet { flex: 1; min-height: 0; display: flex; overflow: hidden; background: #779bd0; border-top: 1px solid #5f86b5; margin-top: 3px; }
.grid { flex: 1; min-width: 0; overflow: hidden; background: #fff; }
table { table-layout: fixed; border-collapse: separate; border-spacing: 0; font: 16px/18px "Liberation Sans", Arial, sans-serif; color: #000; }
.head-col { width: 34px; }
thead th { height: 22px; box-sizing: border-box; padding: 2px 0 0; font-weight: 400; color: #1c3f5c; border-right: 1px solid #9eb6ce; border-bottom: 1px solid #9eb6ce; background: linear-gradient(#f9fbfd, #d5dce9); }
thead .corner { background: linear-gradient(135deg, #a9c4e9 65%, #e8f0fb 66%); }
thead th.hot { background: linear-gradient(#f8d79b, #f1bd5d); border-color: #f29536; }
tbody th { box-sizing: border-box; padding: 0; font-weight: 400; vertical-align: bottom; color: #1c3f5c; background: #e4ecf7; border-right: 1px solid #9eb6ce; border-bottom: 1px solid #9eb6ce; }
tbody th.hot { background: #ffd58d; border-color: #f29536; }
td { position: relative; box-sizing: border-box; padding: 0 3px; vertical-align: bottom; white-space: nowrap; border-right: 1px solid #d0d7e5; border-bottom: 1px solid #d0d7e5; --ix: 0px; --iy: 0px; box-shadow: inset var(--ix) 0 #000, inset 0 var(--iy) #000; }
.p1 th, .p1 td { padding-bottom: 1px; }
.p2 th, .p2 td { padding-bottom: 2px; }
.p8 th { padding-bottom: 8px; }
.p2 td.calibri { padding-bottom: 0; }
td.fill { background: #cfc; }
td.r { text-align: right; }
td.c { text-align: center; }
td.ind { padding-left: 8px; }
td.bare { border-right-color: #fff; }
td.kr { border-right-color: #000; }
td.kb { border-bottom-color: #000; }
td.kr2 { border-right-color: #000; --ix: -1px; }
td.kb2 { border-bottom-color: #000; --iy: -1px; }
td.red { color: #f00; } td.blue { color: #00f; } td.green { color: #008000; }
td.b { font-weight: 700; }
td.label { font-size: 17px; }
td.calibri { font-family: "Noto Sans", "Open Sans", sans-serif; }
td.small { font-family: "Noto Sans", sans-serif; font-size: 16px; line-height: 20px; }
td.t19 { font-size: 19px; line-height: 28px; }
td.t20 { font-size: 20px; line-height: 26px; }
td.t21 { font-size: 21px; line-height: 26px; }
td.t17 { font-size: 17px; line-height: 26px; }
td.t42 { font-size: 42px; line-height: 42px; vertical-align: top; padding-left: 7px; }
.p8 td.low { padding-bottom: 7px; }
td.box2::after, td.green-box::after, td.red-box::after, td.selected::after { content: ""; position: absolute; z-index: 1; pointer-events: none; }
td.box2::after { inset: -2px -1px -1px -2px; border: 2px solid #000; }
td.green-box::after { inset: -2px; border: 3px solid #008000; }
td.red-box::after { inset: -2px; border: 3px solid #f00; }
td.kr + td.red-box::after { border-left: 0; left: 0; }
td.selected::after { inset: -2px; border: 3px solid #000; }
td.selected::before { content: ""; position: absolute; z-index: 2; right: -4px; bottom: -4px; width: 5px; height: 5px; background: #000; border: solid #fff; border-width: 1px 0 0 1px; }
td.comment::before { content: ""; position: absolute; top: 0; right: 0; border: 3px solid #f00; border-left-color: transparent; border-bottom-color: transparent; }
td.dbl { border-bottom: 3px double #000; }
.p1 td.dbl { padding-bottom: 0; }
.warning, .remark { margin: -2px 0 -1px; font: bold 17px/26px "Noto Sans", sans-serif; color: #f00; }
.remark { font-weight: 400; font-size: 16px; color: #000; margin: -2px 0; }

.vscroll { flex: none; width: 19px; margin-right: 4px; box-sizing: border-box; border-left: 1px solid #5f86b5; display: flex; flex-direction: column; background: linear-gradient(90deg, #6a8cbb, #86a5cf); }
.split { height: 5px; margin: 1px; background: #fff; border: 1px solid #6485b3; }
.vscroll button { height: 20px; }
.vthumb { flex: 9 1 0; border: 1px solid #5b7299; border-radius: 2px; background: linear-gradient(90deg, #eef2f7, #cfd7e2 50%, #b7c3d3); display: flex; align-items: center; justify-content: center; margin-top: 2px; }
.vthumb i { width: 8px; height: 8px; background: repeating-linear-gradient(#7b8798 0 1px, transparent 1px 2px); }
.vtrack { flex: 0 0 57px; }

.sheet-bar { flex: none; height: 21px; box-sizing: border-box; border-top: 1px solid #7396c5; border-bottom: 1px solid #5079b0; display: flex; background: linear-gradient(#88a8d8, #a2bbe0 8px, #98b2db); font-size: 15px; }
.sheet-nav { width: 78px; display: flex; justify-content: space-around; background: linear-gradient(#d9e7fa, #c0d6f4); }
.sheet-tab { position: relative; width: 78px; margin-right: -15px; height: 19px; }
.sheet-tab .shape { position: absolute; left: 0; top: 0; }
.sheet-tab span { position: relative; color: #15428b; padding-right: 7px; }
.sheet-tab.on { z-index: 1; font-weight: 700; }
.sheet-tab.on span { padding-right: 11px; }
.sheet-tab.new { width: 48px; }
.hscroll { margin-left: auto; flex: 0 0 760px; display: flex; margin-right: 23px; background: #7795c2; }
.hsplit { width: 5px; background: #fff; border: 1px solid #6485b3; }
.hscroll button { width: 22px; }
.hthumb { flex: 1; border: 1px solid #5b7299; border-radius: 2px; background: linear-gradient(#eef2f7, #d5dce6 50%, #b9c4d2 55%, #cbd4e0); display: flex; align-items: center; justify-content: center; }
.hthumb i { width: 8px; height: 8px; background: repeating-linear-gradient(90deg, #7b8798 0 1px, transparent 1px 2px); }
.htrack { flex: 0 0 79px; }

.status { flex: none; height: 26px; display: flex; align-items: stretch; background: linear-gradient(#fff 1px, #dceafb 2px, #c8dcf8 9px, #b0cef5 10px, #d8e8fb 24px, #e8f2fd); color: #15295f; }
.ready { padding: 5px 12px 0 7px; border-right: 1px solid #8fb3e3; }
.status-right { margin-left: auto; width: 297px; box-sizing: border-box; border-left: 2px solid #f2f8ff; box-shadow: -1px 0 #7d9fce; display: flex; align-items: center; padding: 0 5px 0 5px; background: linear-gradient(#b7d0f3, #a1c1ee 40%, #7ea8e0 45%, #a5c5f0); }
.views { display: flex; border: 1px solid #6b90c2; border-radius: 2px; background: #c9dcf5; }
.views button { width: 22px; height: 21px; }
.views button + button { border-left: 1px solid #a6c2e8; }
.views .on { background: linear-gradient(#fde3a6, #fbc35c); }
.pct { width: 50px; color: #15295f; }
.round { width: 20px; }
input[type="range"] { appearance: none; flex: 1; min-width: 0; margin: 0; height: 20px; background: linear-gradient(#54749f, #54749f) 0 10px / 100% 1px no-repeat; }
input[type="range"]::-webkit-slider-thumb { appearance: none; width: 11px; height: 16px; background: #eef4fd; border: 2px solid #54749f; clip-path: polygon(0 0, 100% 0, 100% 65%, 50% 100%, 0 65%); }

.taskbar { flex: none; height: 48px; box-sizing: border-box; border-top: 1px solid #16233f; display: flex; background: linear-gradient(90deg, #1f3560, #5d6d90 60px, #3a4f80 230px, #2f4d86 900px, #2b4880); box-shadow: inset 0 1px #6a80a8; color: #fff; font-size: 14px; }
.start { width: 46px; margin: 0 16px 0 10px; }
.task { width: 158px; margin: 0 4px 1px 0; box-sizing: border-box; justify-content: flex-start; padding-left: 9px; gap: 5px; border: 1px solid #a9b6cf; border-radius: 3px; box-shadow: 0 0 0 1px #15223f; background: linear-gradient(165deg, #a3aec4, #7888ab 35%, #465b8b 50%, #4b6197); }
.task.on { background: linear-gradient(165deg, #dfe4ec, #b8c1d3 35%, #8090b3 50%, #a5b1cc); border-color: #e8edf5; }
.tray { margin-left: auto; display: flex; align-items: center; gap: 10px; }
.lang { margin: 0 8px 4px 0; }
.tray time { width: 76px; margin-left: 8px; text-align: center; line-height: 22px; }
.desktop { width: 13px; height: 46px; border: 1px solid #8394b7; background: linear-gradient(#2a4273, #566a95 50%, #25407a 52%, #2c5099); box-shadow: 0 0 0 1px #16233f; }
</style>
